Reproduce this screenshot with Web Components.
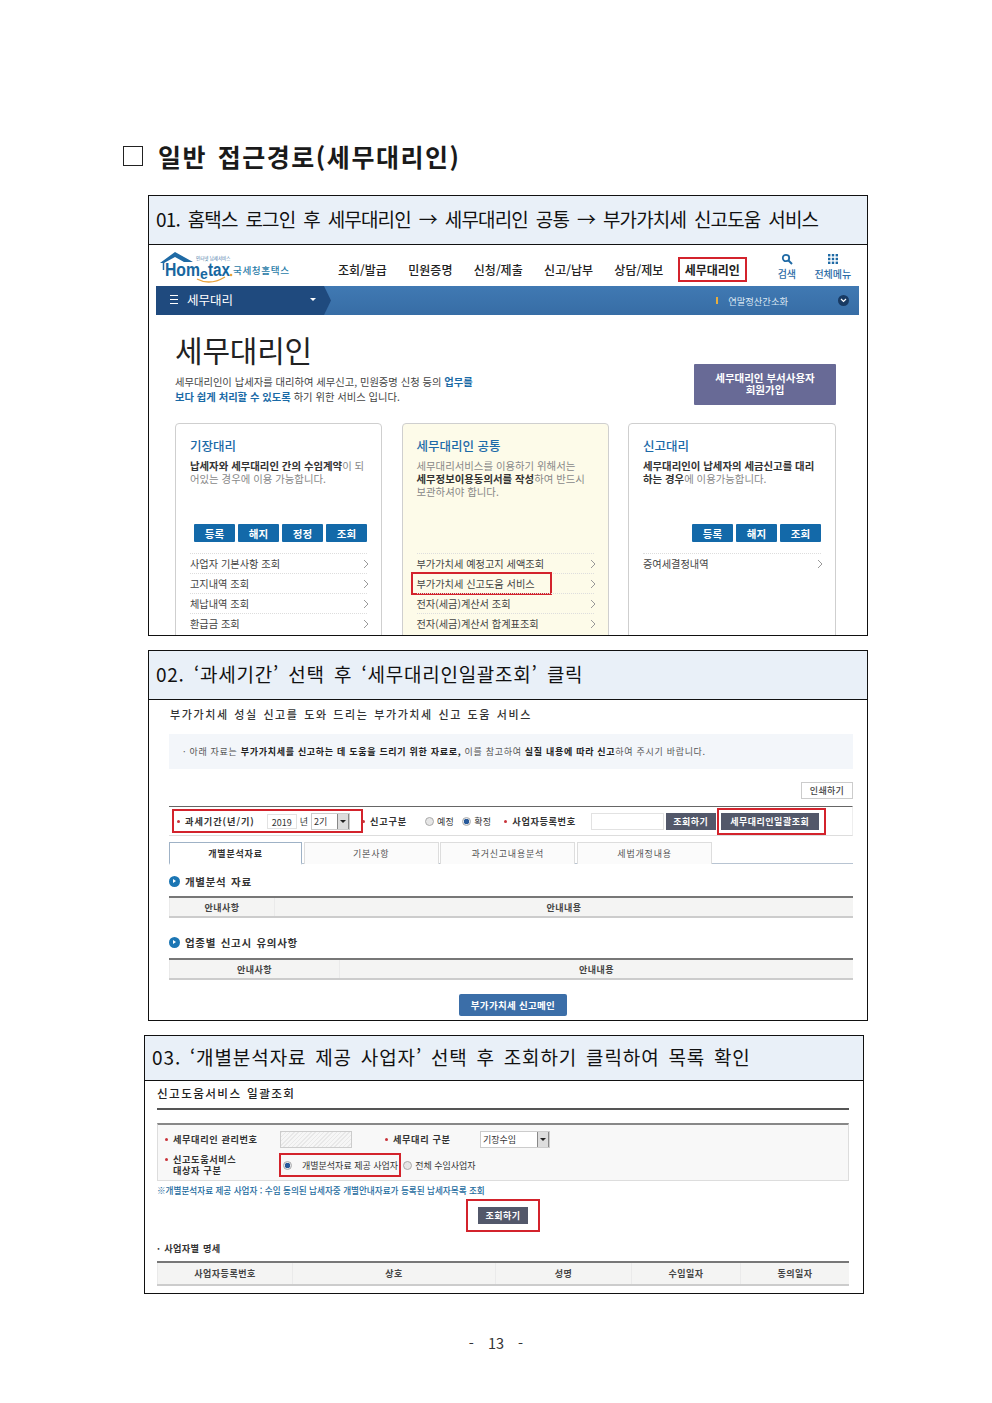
<!DOCTYPE html>
<html lang="ko">
<head>
<meta charset="utf-8">
<title>일반 접근경로</title>
<style>
  html, body { margin: 0; background: #fff; }
  body { font-family: "Noto Sans CJK KR", "Liberation Sans", sans-serif; color: #222; }
</style>
</head>
<body>
<doc-page>
  <doc-heading>일반 접근경로(세무대리인)</doc-heading>

  <step-frame style="--head:49px;--body:390px;--title-spacing:-.85px;--word:3.4px">
    <span slot="title">01. 홈택스 로그인 후 세무대리인 → 세무대리인 공통 → 부가가치세 신고도움 서비스</span>
    <ht-header></ht-header>
    <ht-bar></ht-bar>
    <agent-intro></agent-intro>
    <agent-cards>
      <agent-card heading="기장대리" buttons="등록,해지,정정,조회">
        <b>납세자와 세무대리인 간의 수임계약</b><span>이 되</span><br><span>어있는 경우에 이용 가능합니다.</span>
        <card-row slot="rows">사업자 기본사항 조회</card-row>
        <card-row slot="rows">고지내역 조회</card-row>
        <card-row slot="rows">체납내역 조회</card-row>
        <card-row slot="rows">환급금 조회</card-row>
      </agent-card>
      <agent-card heading="세무대리인 공통" tint>
        <span>세무대리서비스를 이용하기 위해서는</span><br><b>세무정보이용동의서를 작성</b><span>하여 반드시</span><br><span>보관하셔야 합니다.</span>
        <card-row slot="rows">부가가치세 예정고지 세액조회</card-row>
        <card-row slot="rows" marked>부가가치세 신고도움 서비스</card-row>
        <card-row slot="rows">전자(세금)계산서 조회</card-row>
        <card-row slot="rows">전자(세금)계산서 합계표조회</card-row>
      </agent-card>
      <agent-card heading="신고대리" buttons="등록,해지,조회">
        <b>세무대리인이 납세자의 세금신고를 대리</b><br><b>하는 경우</b><span>에 이용가능합니다.</span>
        <card-row slot="rows">증여세결정내역</card-row>
      </agent-card>
    </agent-cards>
  </step-frame>

  <step-frame style="--head:49px;--body:320px;--title-spacing:.75px;--word:3.2px">
    <span slot="title">02. ‘과세기간’ 선택 후 ‘세무대리인일괄조회’ 클릭</span>
    <vat-service></vat-service>
  </step-frame>

  <step-frame style="--head:45px;--body:212px;--shift:-4px;--title-spacing:.9px;--word:2.6px">
    <span slot="title">03. ‘개별분석자료 제공 사업자’ 선택 후 조회하기 클릭하여 목록 확인</span>
    <bulk-lookup></bulk-lookup>
  </step-frame>

  <doc-footer>- 13 -</doc-footer>
</doc-page>

<script>
const KR = '"Noto Sans CJK KR", "Liberation Sans", sans-serif';

// small base class, every element just sets its markup in an open shadow root
class Shadowed extends HTMLElement {
    constructor(){
        super();
        this.attachShadow({mode: "open"});
    }
    connectedCallback(){
        this.shadowRoot.innerHTML = this.render();
    }
}

class DocPage extends Shadowed {
    render(){ return `
        <style>
            :host{display:block;width:992px;height:1403px;box-sizing:border-box;padding:139px 124px 0 148px;font-family:${KR};overflow:hidden}
        </style>
        <slot></slot>`; }
}

class DocHeading extends Shadowed {
    render(){ return `
        <style>
            :host{display:flex;align-items:center;height:34px;margin:0 0 22px -25px;font-size:25px;font-weight:700;color:#1a1a1a;white-space:nowrap;word-spacing:2px;letter-spacing:1.55px}
            i{display:block;width:18px;height:18px;border:1px solid #222;margin-right:15px}
        </style>
        <i></i><span><slot></slot></span>`; }
}

class StepFrame extends Shadowed {
    render(){ return `
        <style>
            :host{display:block;width:720px;box-sizing:border-box;border:1px solid #111;margin:0 0 14px var(--shift,0);background:#fff}
            header{height:var(--head);box-sizing:border-box;display:flex;align-items:center;padding:0 0 4px 7px;background:#e9f0f8;border-bottom:1px solid #111;font-size:19px;color:#111;white-space:nowrap;word-spacing:var(--word,3px);letter-spacing:var(--title-spacing,0)}
            main{height:var(--body);overflow:hidden}
        </style>
        <header><slot name="title"></slot></header>
        <main><slot></slot></main>`; }
}

class HtHeader extends Shadowed {
    render(){
        const nav = ["조회/발급","민원증명","신청/제출","신고/납부","상담/제보"];
        return `
        <style>
            :host{display:flex;height:41px;align-items:stretch;font-family:${KR}}
            .logo{width:130px;margin:6px 0 0 11px;flex:none}
            nav{display:flex;gap:21.4px;margin-left:48px;align-items:center;padding-top:7px;font-size:12px;font-weight:500;color:#222;white-space:nowrap}
            .mark{outline:2px solid #d3232c;padding:2px 5px;margin-left:-5px;font-weight:700}
            .tool{display:flex;flex-direction:column;align-items:center;font-size:10px;font-weight:500;color:#2b6ba6;white-space:nowrap;padding-top:8px;width:44px;line-height:13px}
            .tool svg{height:12px;width:12px;margin-bottom:2px}
            .tools{display:flex;gap:2px;margin-left:20px}
        </style>
        <svg class="logo" viewBox="0 0 130 32" width="130" height="32">
            <path d="M0 12 L15 1 L33 11 H24 L15 6 L4 12 Z" fill="#1f6aa5"/>
            <path d="M3.5 11 V19" stroke="#1f6aa5" stroke-width="1.5"/>
            <text x="36" y="8.5" font-size="4.5" fill="#4a7aa8">인터넷 납세서비스</text>
            <text x="5" y="25" font-family="Liberation Sans" font-size="18" font-weight="700" fill="#17679f" textLength="35" lengthAdjust="spacingAndGlyphs">Hom</text>
            <text x="40" y="28" font-family="Liberation Sans" font-size="14" font-weight="700" fill="#17679f">e</text>
            <text x="48" y="25" font-family="Liberation Sans" font-size="18" font-weight="700" fill="#17679f" textLength="22" lengthAdjust="spacingAndGlyphs">tax</text>
            <path d="M37 28 Q50 35 65 26" fill="none" stroke="#e8a33d" stroke-width="1.4"/>
            <circle cx="71" cy="24" r="1.3" fill="#e8a33d"/>
            <text x="73" y="23" font-size="9.6" font-weight="500" fill="#2a7ca8" textLength="56">국세청홈택스</text>
        </svg>
        <nav>${nav.map(n => `<span>${n}</span>`).join("")}<span class="mark">세무대리인</span></nav>
        <div class="tools">
            <div class="tool">
                <svg viewBox="0 0 12 12"><circle cx="5" cy="5" r="3.2" fill="none" stroke="#1f6aa5" stroke-width="1.8"/><path d="M7.5 7.5 L11 11" stroke="#1f6aa5" stroke-width="2"/></svg>
                검색
            </div>
            <div class="tool">
                <svg viewBox="0 0 12 12" fill="#1f6aa5"><rect x="1" y="1" width="2.4" height="2.4"/><rect x="4.8" y="1" width="2.4" height="2.4"/><rect x="8.6" y="1" width="2.4" height="2.4"/><rect x="1" y="4.8" width="2.4" height="2.4"/><rect x="4.8" y="4.8" width="2.4" height="2.4"/><rect x="8.6" y="4.8" width="2.4" height="2.4"/><rect x="1" y="8.6" width="2.4" height="2.4"/><rect x="4.8" y="8.6" width="2.4" height="2.4"/><rect x="8.6" y="8.6" width="2.4" height="2.4"/></svg>
                전체메뉴
            </div>
        </div>`; }
}

class HtBar extends Shadowed {
    render(){ return `
        <style>
            :host{display:flex;height:29px;margin:0 8px 0 7px;background:linear-gradient(#4079b3,#376da5);align-items:stretch;color:#fff;font-family:${KR}}
            .left{width:175px;display:flex;align-items:center;background:#1f4a7e;clip-path:polygon(0 0,168px 0,175px 50%,168px 100%,0 100%);font-size:12.5px;box-sizing:border-box;padding:0 14px 2px;white-space:nowrap}
            .ham{width:8px;height:7px;border-top:1px solid #fff;border-bottom:1px solid #fff;margin-right:9px}
            .ham::after{content:"";display:block;height:1px;background:#fff;margin-top:3px}
            .caret{margin-left:auto;border:3px solid transparent;border-top-color:#fff;border-bottom:0;margin-right:1px}
            .right{flex:1;display:flex;align-items:center;justify-content:flex-end;padding-right:10px;font-size:9.3px;color:#dce8f3;white-space:nowrap}
            .tick{width:2px;height:7px;background:#e5ad3f;margin-right:10px}
            .more{width:11px;height:11px;border-radius:50%;background:#183a63;margin-left:50px;display:flex;align-items:center;justify-content:center}
        </style>
        <div class="left"><i class="ham"></i>세무대리<i class="caret"></i></div>
        <div class="right"><i class="tick"></i>연말정산간소화
            <span class="more"><svg width="7" height="5" viewBox="0 0 7 5"><path d="M1 1 L3.5 3.5 L6 1" fill="none" stroke="#fff" stroke-width="1.2"/></svg></span>
        </div>`; }
}

class AgentIntro extends Shadowed {
    render(){ return `
        <style>
            :host{display:flex;justify-content:space-between;height:108px;padding:0 31px 0 26px;font-family:${KR}}
            h1{margin:13px 0 0;font-size:30px;font-weight:400;line-height:42px;color:#222;letter-spacing:-.2px}
            p{margin:4px 0 0;font-size:10.3px;line-height:15px;color:#444;white-space:nowrap}
            em{font-style:normal;font-weight:700;color:#1a6aa6}
            button{all:unset;box-sizing:border-box;width:142px;height:41px;margin-top:49px;padding-bottom:1px;background:#686a96;color:#fff;font-size:10.5px;font-weight:700;line-height:12px;text-align:center;border-radius:1px;display:flex;align-items:center;justify-content:center}
        </style>
        <div>
            <h1>세무대리인</h1>
            <p>세무대리인이 납세자를 대리하여 세무신고, 민원증명 신청 등의 <em>업무를</em><br><em>보다 쉽게 처리할 수 있도록</em> 하기 위한 서비스 입니다.</p>
        </div>
        <button>세무대리인 부서사용자<br>회원가입</button>`; }
}

class AgentCards extends Shadowed {
    render(){ return `
        <style>
            :host{display:grid;grid-template-columns:207px 207px 208px;gap:19.5px;padding:0 31px 0 26px}
        </style>
        <slot></slot>`; }
}

class AgentCard extends Shadowed {
    render(){
        const btns = (this.getAttribute("buttons") || "").split(",").filter(Boolean);
        return `
        <style>
            :host{display:block;box-sizing:border-box;height:240px;border:1px solid #cfcfcf;border-radius:4px;padding:12px 14px 0 14px;background:${this.hasAttribute("tint") ? "#fdfbe9" : "#fff"};font-family:${KR}}
            h2{margin:0;font-size:12.5px;font-weight:500;line-height:20px;color:#1c6aa8}
            .desc{height:65px;font-size:10.4px;line-height:13px;color:#888;margin-top:3px;white-space:nowrap}
            ::slotted(b){color:#333}
            .btns{height:19px;display:flex;justify-content:flex-end;gap:3px;margin:0 0 10px}
            .btns span{width:41px;height:18px;background:#1369a9;color:#fff;font-size:10.5px;font-weight:700;display:flex;align-items:center;justify-content:center;border-radius:1px}
        </style>
        <h2>${this.getAttribute("heading")}</h2>
        <div class="desc"><slot></slot></div>
        <div class="btns">${btns.map(b => `<span>${b}</span>`).join("")}</div>
        <slot name="rows"></slot>`; }
}

class CardRow extends Shadowed {
    render(){
        const marked = this.hasAttribute("marked");
        return `
        <style>
            :host{display:flex;align-items:center;justify-content:space-between;height:20px;box-sizing:border-box;border-top:1px dotted #ddd;font-size:10.2px;color:#444;white-space:nowrap;position:relative}
            svg{margin-right:-2px}
            .mark{position:absolute;left:-6px;top:-2px;width:141px;height:23px;box-sizing:border-box;border:2px solid #d3232c}
        </style>
        <span><slot></slot></span>
        <svg width="6" height="10" viewBox="0 0 6 10"><path d="M1 1 L5 5 L1 9" fill="none" stroke="#999" stroke-width="1"/></svg>
        ${marked ? `<i class="mark"></i>` : ""}`; }
}

class ReqDot extends Shadowed {
    render(){
        const top = this.hasAttribute("top");
        return `
        <style>
            :host{display:inline-flex;align-items:${top ? "flex-start" : "center"};white-space:nowrap;font-weight:700;color:#333;font-size:9.2px;letter-spacing:.6px;line-height:11px}
            i{width:3px;height:3px;border-radius:50%;background:#c8333a;margin:${top ? "4px" : "0"} 5px 0 0;flex:none}
        </style>
        <i></i><span><slot></slot></span>`; }
}

class RadioDot extends Shadowed {
    render(){
        const on = this.hasAttribute("on");
        return `
        <style>
            :host{display:inline-flex;align-items:center;white-space:nowrap;font-size:9px;color:#333;gap:3px;letter-spacing:.3px}
            i{width:9px;height:9px;border-radius:50%;border:1px solid #aaa;background:${on ? "radial-gradient(#27599a 0 2.5px,#e3e6ea 3px)" : "#e6e6e6"};box-sizing:border-box;flex:none}
        </style>
        <i></i><span><slot></slot></span>`; }
}

class GrayBtn extends Shadowed {
    render(){ return `
        <style>
            :host{display:inline-flex;align-items:center;justify-content:center;box-sizing:border-box;height:17px;padding:0 4px;background:#53586a;color:#fff;font-size:9px;font-weight:700;white-space:nowrap;letter-spacing:.5px}
        </style>
        <slot></slot>`; }
}

class FakeSelect extends Shadowed {
    render(){ return `
        <style>
            :host{display:inline-flex;align-items:center;box-sizing:border-box;height:17px;background:#fff;border:1px solid #ccc;font-size:9px;color:#333;white-space:nowrap;padding-left:2px}
            span{flex:1}
            i{width:12px;height:15px;background:#ddd;border-left:1px solid #888;border-right:1px solid #888;box-sizing:border-box;display:flex;align-items:center;justify-content:center}
            i::after{content:"";border:3px solid transparent;border-top-color:#222;border-bottom:0}
        </style>
        <span><slot></slot></span><i></i>`; }
}

class DataTable extends Shadowed {
    render(){
        const heads = this.getAttribute("heads").split(",");
        return `
        <style>
            :host{display:grid;grid-template-columns:${this.getAttribute("cols")};height:${this.getAttribute("h") || 22}px;box-sizing:border-box;border-top:2px solid #777;border-bottom:2px solid #ccc;background:#f4f4f3;font-size:9px;font-weight:700;color:#444;letter-spacing:.5px;text-align:center}
            div{display:flex;align-items:center;justify-content:center;border-left:1px solid #eaeaea}
            div:first-child{border-left:0}
        </style>
        ${heads.map(h => `<div>${h}</div>`).join("")}`; }
}

class SectionTitle extends Shadowed {
    render(){ return `
        <style>
            :host{display:flex;align-items:center;gap:5px;font-size:10.5px;font-weight:700;color:#333;height:16px;white-space:nowrap;word-spacing:1px;letter-spacing:.7px}
            i{width:11px;height:11px;border-radius:50%;background:#1c76b4;display:flex;align-items:center;justify-content:center}
            i::after{content:"";border:2px solid transparent;border-left:3px solid #fff;border-right:0}
        </style>
        <i></i><span><slot></slot></span>`; }
}

class VatService extends Shadowed {
    render(){ return `
        <style>
            :host{display:block;padding:0 14px 0 20px;font-family:${KR}}
            h3{margin:7px 0 0 1px;height:14px;font-size:11px;line-height:14px;font-weight:500;color:#333;letter-spacing:1.6px;word-spacing:1px;white-space:nowrap}
            .info{margin-top:13px;height:35px;background:#f3f6fa;display:flex;align-items:center;padding-left:14px;font-size:9px;letter-spacing:.7px;color:#555;white-space:nowrap}
            .info b{color:#222}
            .print{display:flex;justify-content:flex-end;margin-top:13px}
            .print span{width:52px;height:17px;border:1px solid #ccc;box-sizing:border-box;display:flex;align-items:center;justify-content:center;font-size:9px;font-weight:500;color:#444;letter-spacing:.3px}
            .search{margin-top:7px;height:30px;box-sizing:border-box;border-top:1px solid #666;border-bottom:1px solid #ddd;border-right:1px solid #eee;display:flex;align-items:center;font-size:9px;color:#333;white-space:nowrap}
            .mark{display:inline-flex;align-items:center;outline:2px solid #d3232c;height:20px}
            .period{width:187px;margin-left:5px;padding-left:3px;box-sizing:border-box}
            .box{display:inline-block;height:15px;line-height:15px;background:#fff;border:1px solid #e2e2e2;box-sizing:border-box;text-align:center}
            .tabs{display:flex;margin-top:6px;height:22px;box-sizing:border-box;border-bottom:1px solid #b8c4d2;gap:1.7px;font-size:9px;color:#555;letter-spacing:.8px}
            .tabs span{width:135px;height:22px;box-sizing:border-box;border:1px solid #ddd;border-bottom:0;display:flex;align-items:center;justify-content:center;background:#fbfbfb}
            .tabs .on{width:133px;background:#fff;border:1px solid #9fb2c6;border-bottom:2px solid #fff;font-weight:700;color:#333;height:23px}
            .main{display:flex;justify-content:center;margin:14px 0 0 4px}
            .main span{width:108px;height:22px;background:#3b6ea8;border-radius:2px;color:#fff;font-size:9.5px;font-weight:700;display:flex;align-items:center;justify-content:center;letter-spacing:.3px}
        </style>
        <h3>부가가치세 성실 신고를 도와 드리는 부가가치세 신고 도움 서비스</h3>
        <div class="info"><span>· 아래 자료는 <b>부가가치세를 신고하는 데 도움을 드리기 위한 자료로,</b> 이를 참고하여 <b>실질 내용에 따라 신고</b>하여 주시기 바랍니다.</span></div>
        <div class="print"><span>인쇄하기</span></div>
        <div class="search">
            <span class="mark period">
                <req-dot style="letter-spacing:.95px">과세기간(년/기)</req-dot>
                <span class="box" style="width:30px;margin-left:12px">2019</span>
                <span style="margin:0 3px">년</span>
                <fake-select style="width:39px">2기</fake-select>
            </span>
            <req-dot style="margin-left:1px;letter-spacing:.8px">신고구분</req-dot>
            <radio-dot style="margin-left:18px">예정</radio-dot>
            <radio-dot on style="margin-left:8px">확정</radio-dot>
            <req-dot style="margin-left:13px">사업자등록번호</req-dot>
            <span class="box" style="width:73px;height:17px;margin-left:15px"></span>
            <gray-btn style="width:50px;margin-left:2px">조회하기</gray-btn>
            <span class="mark" style="margin-left:5px;padding-right:3px;height:19px;outline-offset:2px"><gray-btn style="width:98px">세무대리인일괄조회</gray-btn></span>
        </div>
        <div class="tabs"><span class="on">개별분석자료</span><span>기본사항</span><span>과거신고내용분석</span><span>세법개정내용</span></div>
        <section-title style="margin-top:9px">개별분석 자료</section-title>
        <data-table style="margin-top:7px" cols="105px 1fr" heads="안내사항,안내내용"></data-table>
        <section-title style="margin-top:16px">업종별 신고시 유의사항</section-title>
        <data-table style="margin-top:8px" cols="170px 1fr" heads="안내사항,안내내용"></data-table>
        <div class="main"><span>부가가치세 신고메인</span></div>`; }
}

class BulkLookup extends Shadowed {
    render(){ return `
        <style>
            :host{display:block;padding:0 14px 0 12px;font-family:${KR}}
            h3{margin:1px 0 0;height:22px;font-size:11.6px;line-height:22px;font-weight:500;color:#222;letter-spacing:1.4px;word-spacing:1px;white-space:nowrap}
            hr{margin:4px 0 0;height:2px;border:0;background:#555}
            .form{margin-top:13px;height:58px;box-sizing:border-box;border-top:2px solid #888;border-bottom:1px solid #ddd;border-left:1px solid #ddd;border-right:1px solid #ddd;background:#f8f8f8;padding:5px 0 0 7px;display:grid;grid-template-columns:115px 105px 95px 1fr;grid-template-rows:19px 27px;align-items:center;font-size:9px}
            .hatch{display:block;width:72px;height:17px;border:1px solid #ccc;box-sizing:border-box;background:repeating-linear-gradient(135deg,#e8e8e8 0 1px,#f6f6f6 1px 3px)}
            .field{display:flex;align-items:center}
            .mark{display:inline-flex;align-items:center;outline:2px solid #d3232c;height:20px;padding:0 1px 0 2px;margin-left:1px}
            .note{margin-top:3px;font-size:8.6px;line-height:12px;color:#1c6b9e;white-space:nowrap;font-weight:500}
            .go{display:flex;justify-content:center;margin-top:5px}
            .go span{outline:2px solid #d3232c;padding:6px 10px;display:block;line-height:0}
            .sub{margin-top:12px;font-size:9.2px;font-weight:700;color:#333;line-height:12px;white-space:nowrap;word-spacing:1px;letter-spacing:.3px}
        </style>
        <h3>신고도움서비스 일괄조회</h3>
        <hr>
        <div class="form">
            <req-dot>세무대리인 관리번호</req-dot>
            <i class="hatch"></i>
            <req-dot>세무대리 구분</req-dot>
            <fake-select style="width:70px">기장수임</fake-select>
            <req-dot top style="align-self:start;margin-top:5px">신고도움서비스<br>대상자 구분</req-dot>
            <span class="field" style="grid-column:2 / 5;align-self:start;padding-top:6px">
                <span class="mark"><radio-dot on style="gap:10px;letter-spacing:0">개별분석자료 제공 사업자</radio-dot></span>
                <radio-dot style="margin-left:4px;letter-spacing:0">전체 수임사업자</radio-dot>
            </span>
        </div>
        <div class="note">※개별분석자료 제공 사업자 : 수임 동의된 납세자중 개별안내자료가 등록된 납세자목록 조회</div>
        <div class="go"><span><gray-btn style="width:50px">조회하기</gray-btn></span></div>
        <div class="sub">· 사업자별 명세</div>
        <data-table style="margin-top:7px" h="25" cols="135px 203px 136px 109px 1fr" heads="사업자등록번호,상호,성명,수임일자,동의일자"></data-table>`; }
}

class DocFooter extends Shadowed {
    render(){ return `
        <style>
            :host{display:block;text-align:center;margin:38px 0 0 0;width:696px;font-size:14.5px;color:#333;word-spacing:10px}
        </style>
        <slot></slot>`; }
}

customElements.define("doc-page", DocPage);
customElements.define("doc-heading", DocHeading);
customElements.define("step-frame", StepFrame);
customElements.define("ht-header", HtHeader);
customElements.define("ht-bar", HtBar);
customElements.define("agent-intro", AgentIntro);
customElements.define("agent-cards", AgentCards);
customElements.define("agent-card", AgentCard);
customElements.define("card-row", CardRow);
customElements.define("req-dot", ReqDot);
customElements.define("radio-dot", RadioDot);
customElements.define("gray-btn", GrayBtn);
customElements.define("fake-select", FakeSelect);
customElements.define("data-table", DataTable);
customElements.define("section-title", SectionTitle);
customElements.define("vat-service", VatService);
customElements.define("bulk-lookup", BulkLookup);
customElements.define("doc-footer", DocFooter);
</script>
</body>
</html>
